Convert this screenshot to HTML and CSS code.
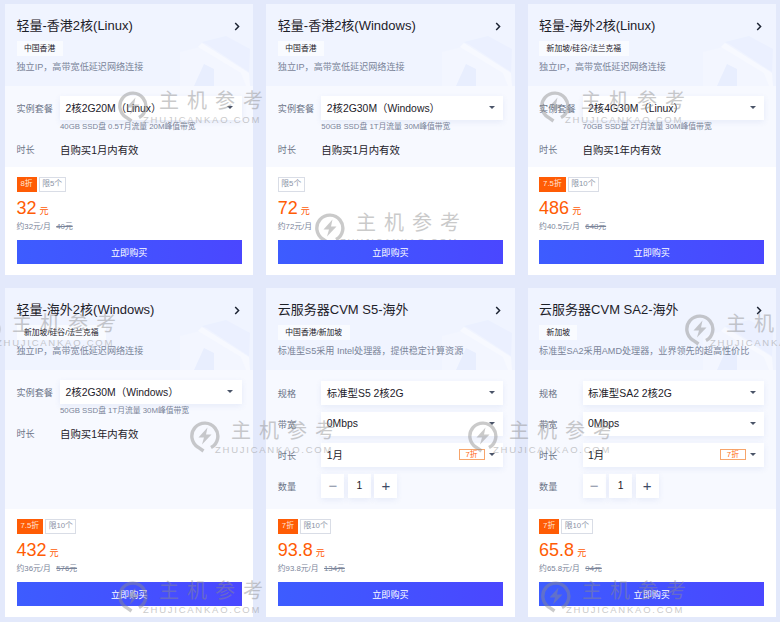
FILE: index.html
```html
<!DOCTYPE html>
<html lang="en">
<head>
  <meta charset="UTF-8">
  <meta name="viewport" content="width=device-width, initial-scale=1.0">
  <title>轻量与云服务器活动</title>
  <link rel="stylesheet" href="styles.css">
</head>
<body>
  <!-- shared drawings -->
  <svg class="defs" width="0" height="0">
    <symbol id="chevron" viewBox="0 0 6 9">
      <path d="M1.2 1 L4.6 4.5 L1.2 8" fill="none" stroke="#1d2433" stroke-width="1.5"/>
    </symbol>
    <symbol id="decor" viewBox="0 0 72 50">
      <path d="M0 16 L24 10 L66 36 L70 50 L0 50 Z" fill="#f3f6ff"/>
      <path d="M22 6 L46 0 L70 13 L69 36 L28 9 Z" fill="#ebf0ff"/>
      <path d="M22 7 L69 37 L70 50 L66 50 L61 37 L18 11 Z" fill="#f7f9ff"/>
      <path d="M14 50 L24 28 L34 33 L34 50 Z" fill="#e8eefe"/>
    </symbol>
    <symbol id="mark" viewBox="0 0 30 33">
      <path d="M21 27.6 A13 13 0 1 0 8 27.2 L13.5 31" fill="none" stroke="#8c8c8c" stroke-width="3.4"/>
      <path d="M17.5 7.5 L8.5 17.5 H14 L12 24.5 L21.5 14.5 H16 Z" fill="#8c8c8c"/>
    </symbol>
  </svg>

  <div class="grid">

    <div class="card">
      <div class="head">
        <svg class="decor"><use href="#decor"/></svg>
        <div class="title-row"><h3>轻量-香港2核(Linux)</h3><svg class="chevron"><use href="#chevron"/></svg></div>
        <span class="region">中国香港</span>
        <p class="desc">独立IP，高带宽低延迟网络连接</p>
      </div>
      <div class="body">
        <div class="row"><span class="label">实例套餐</span><div class="select"><span>2核2G20M（Linux）</span><i class="caret"></i></div></div>
        <p class="spec">40GB SSD盘 0.5T月流量 20M峰值带宽</p>
        <div class="row"><span class="label">时长</span><span class="value">自购买1月内有效</span></div>
      </div>
      <div class="foot">
        <div class="badges"><span class="off">8折</span><span class="limit">限5个</span></div>
        <div class="price">32<small>元</small></div>
        <div class="per">约32元/月<s>40元</s></div>
        <button class="buy">立即购买</button>
      </div>
    </div>

    <div class="card">
      <div class="head">
        <svg class="decor"><use href="#decor"/></svg>
        <div class="title-row"><h3>轻量-香港2核(Windows)</h3><svg class="chevron"><use href="#chevron"/></svg></div>
        <span class="region">中国香港</span>
        <p class="desc">独立IP，高带宽低延迟网络连接</p>
      </div>
      <div class="body">
        <div class="row"><span class="label">实例套餐</span><div class="select"><span>2核2G30M（Windows）</span><i class="caret"></i></div></div>
        <p class="spec">50GB SSD盘 1T月流量 30M峰值带宽</p>
        <div class="row"><span class="label">时长</span><span class="value">自购买1月内有效</span></div>
      </div>
      <div class="foot">
        <div class="badges"><span class="limit">限5个</span></div>
        <div class="price">72<small>元</small></div>
        <div class="per">约72元/月</div>
        <button class="buy">立即购买</button>
      </div>
    </div>

    <div class="card">
      <div class="head">
        <svg class="decor"><use href="#decor"/></svg>
        <div class="title-row"><h3>轻量-海外2核(Linux)</h3><svg class="chevron"><use href="#chevron"/></svg></div>
        <span class="region">新加坡/硅谷/法兰克福</span>
        <p class="desc">独立IP，高带宽低延迟网络连接</p>
      </div>
      <div class="body">
        <div class="row"><span class="label">实例套餐</span><div class="select"><span>2核4G30M（Linux）</span><i class="caret"></i></div></div>
        <p class="spec">70GB SSD盘 2T月流量 30M峰值带宽</p>
        <div class="row"><span class="label">时长</span><span class="value">自购买1年内有效</span></div>
      </div>
      <div class="foot">
        <div class="badges"><span class="off">7.5折</span><span class="limit">限10个</span></div>
        <div class="price">486<small>元</small></div>
        <div class="per">约40.5元/月<s>648元</s></div>
        <button class="buy">立即购买</button>
      </div>
    </div>

    <div class="card">
      <div class="head">
        <svg class="decor"><use href="#decor"/></svg>
        <div class="title-row"><h3>轻量-海外2核(Windows)</h3><svg class="chevron"><use href="#chevron"/></svg></div>
        <span class="region">新加坡/硅谷/法兰克福</span>
        <p class="desc">独立IP，高带宽低延迟网络连接</p>
      </div>
      <div class="body">
        <div class="row"><span class="label">实例套餐</span><div class="select"><span>2核2G30M（Windows）</span><i class="caret"></i></div></div>
        <p class="spec">50GB SSD盘 1T月流量 30M峰值带宽</p>
        <div class="row"><span class="label">时长</span><span class="value">自购买1年内有效</span></div>
      </div>
      <div class="foot">
        <div class="badges"><span class="off">7.5折</span><span class="limit">限10个</span></div>
        <div class="price">432<small>元</small></div>
        <div class="per">约36元/月<s>576元</s></div>
        <button class="buy">立即购买</button>
      </div>
    </div>

    <div class="card">
      <div class="head">
        <svg class="decor"><use href="#decor"/></svg>
        <div class="title-row"><h3>云服务器CVM S5-海外</h3><svg class="chevron"><use href="#chevron"/></svg></div>
        <span class="region">中国香港/新加坡</span>
        <p class="desc">标准型S5采用 Intel处理器，提供稳定计算资源</p>
      </div>
      <div class="body form">
        <div class="row"><span class="label">规格</span><div class="select"><span>标准型S5 2核2G</span><i class="caret"></i></div></div>
        <div class="row"><span class="label">带宽</span><div class="select"><span>0Mbps</span><i class="caret"></i></div></div>
        <div class="row"><span class="label">时长</span><div class="select"><span>1月</span><em class="hint">7折</em><i class="caret"></i></div></div>
        <div class="row"><span class="label">数量</span><div class="stepper"><span class="minus">−</span><span>1</span><span class="plus">+</span></div></div>
      </div>
      <div class="foot">
        <div class="badges"><span class="off">7折</span><span class="limit">限10个</span></div>
        <div class="price">93.8<small>元</small></div>
        <div class="per">约93.8元/月<s>134元</s></div>
        <button class="buy">立即购买</button>
      </div>
    </div>

    <div class="card">
      <div class="head">
        <svg class="decor"><use href="#decor"/></svg>
        <div class="title-row"><h3>云服务器CVM SA2-海外</h3><svg class="chevron"><use href="#chevron"/></svg></div>
        <span class="region">新加坡</span>
        <p class="desc">标准型SA2采用AMD处理器，业界领先的超高性价比</p>
      </div>
      <div class="body form">
        <div class="row"><span class="label">规格</span><div class="select"><span>标准型SA2 2核2G</span><i class="caret"></i></div></div>
        <div class="row"><span class="label">带宽</span><div class="select"><span>0Mbps</span><i class="caret"></i></div></div>
        <div class="row"><span class="label">时长</span><div class="select"><span>1月</span><em class="hint">7折</em><i class="caret"></i></div></div>
        <div class="row"><span class="label">数量</span><div class="stepper"><span class="minus">−</span><span>1</span><span class="plus">+</span></div></div>
      </div>
      <div class="foot">
        <div class="badges"><span class="off">7折</span><span class="limit">限10个</span></div>
        <div class="price">65.8<small>元</small></div>
        <div class="per">约65.8元/月<s>94元</s></div>
        <button class="buy">立即购买</button>
      </div>
    </div>

  </div>

  <!-- watermarks over the page -->
  <div class="wm wm-1"><svg class="wm-icon"><use href="#mark"/></svg><div><b>主机参考</b><span>ZHUJICANKAO.COM</span></div></div>
  <div class="wm wm-2"><svg class="wm-icon"><use href="#mark"/></svg><div><b>主机参考</b><span>ZHUJICANKAO.COM</span></div></div>
  <div class="wm wm-3"><svg class="wm-icon"><use href="#mark"/></svg><div><b>主机参考</b><span>ZHUJICANKAO.COM</span></div></div>
  <div class="wm wm-4"><svg class="wm-icon"><use href="#mark"/></svg><div><b>主机参考</b><span>ZHUJICANKAO.COM</span></div></div>
  <div class="wm wm-5"><svg class="wm-icon"><use href="#mark"/></svg><div><b>主机参考</b><span>ZHUJICANKAO.COM</span></div></div>
  <div class="wm wm-6"><svg class="wm-icon"><use href="#mark"/></svg><div><b>主机参考</b><span>ZHUJICANKAO.COM</span></div></div>
  <div class="wm wm-7"><svg class="wm-icon"><use href="#mark"/></svg><div><b>主机参考</b><span>ZHUJICANKAO.COM</span></div></div>
  <div class="wm wm-8"><svg class="wm-icon"><use href="#mark"/></svg><div><b>主机参考</b><span>ZHUJICANKAO.COM</span></div></div>
  <div class="wm wm-9"><svg class="wm-icon"><use href="#mark"/></svg><div><b>主机参考</b><span>ZHUJICANKAO.COM</span></div></div>
</body>
</html>
```

FILE: styles.css
```css
html, body {
  height: 100%;
  overflow: hidden;
}
body {
  margin: 0;
  position: relative;
  font-family: "Liberation Sans", "Noto Sans CJK SC", sans-serif;
  background-color: #e3e9fb;
  color: #1d2129;
}
.defs {
  position: absolute;
}
.grid {
  display: grid;
  grid-template-columns: repeat(3, 248.3px);
  grid-template-rows: 271px 329px;
  column-gap: 13px;
  row-gap: 13px;
  padding: 4px 0 0 5px;
}
.card {
  display: flex;
  flex-direction: column;
  background-color: #fff;
}
.head {
  position: relative;
  height: 82px;
  flex: none;
  box-sizing: border-box;
  padding: 13px 11.5px 0;
  background-color: #f0f4ff;
  overflow: hidden;
}
.decor {
  position: absolute;
  right: 1px;
  bottom: 0;
  width: 72px;
  height: 50px;
}
.title-row {
  position: relative;
  display: flex;
  justify-content: space-between;
  align-items: center;
  height: 18px;
}
h3 {
  margin: 0;
  font-size: 13px;
  font-weight: 400;
  line-height: 18px;
}
.chevron {
  width: 6px;
  height: 9px;
  margin-right: 2px;
}
.region {
  position: relative;
  display: inline-block;
  margin-top: 6px;
  padding: 0 7.5px;
  height: 15px;
  line-height: 15px;
  font-size: 7.8px;
  background-color: #f9fbff;
}
.desc {
  position: relative;
  margin: 4px 0 0;
  font-size: 9.1px;
  line-height: 14px;
  color: #7a8499;
}
.body {
  flex: 1;
  box-sizing: border-box;
  padding: 10px 11.5px 0 11.5px;
  background-color: #f7f9ff;
}
.body.form {
  padding-top: 11px;
}
.form .row {
  margin-bottom: 7.5px;
}
.row {
  display: flex;
  align-items: center;
  min-height: 23.5px;
}
.label {
  width: 43.5px;
  flex: none;
  font-size: 9.1px;
  color: #6b7487;
}
.value {
  font-size: 10.4px;
}
.select {
  flex: 1;
  display: flex;
  align-items: center;
  height: 23.5px;
  padding: 0 8.5px 0 5.5px;
  font-size: 10.4px;
  background-color: #fff;
  box-shadow: 0 2px 6px rgba(70, 100, 190, 0.09);
}
.select span {
  flex: 1;
}
.caret {
  width: 0;
  height: 0;
  border-left: 3px solid transparent;
  border-right: 3px solid transparent;
  border-top: 3px solid #4a5468;
}
.hint {
  width: 24px;
  height: 9px;
  margin-right: 4px;
  border: 1px solid #f7a56b;
  font-size: 7.8px;
  font-style: normal;
  line-height: 9px;
  text-align: center;
  color: #ff6a13;
}
.stepper {
  display: flex;
  gap: 3.5px;
}
.stepper span {
  width: 23px;
  height: 23.5px;
  font-size: 10.4px;
  line-height: 23.5px;
  text-align: center;
  background-color: #fff;
  box-shadow: 0 2px 6px rgba(70, 100, 190, 0.09);
}
.stepper .minus {
  font-size: 15px;
  color: #8a93a6;
}
.stepper .plus {
  font-size: 15px;
  color: #3d4a66;
}
.spec {
  margin: 1px 0 5px 43.5px;
  font-size: 7.8px;
  line-height: 12px;
  color: #7a8499;
}
.foot {
  height: 108.5px;
  flex: none;
  box-sizing: border-box;
  display: flex;
  flex-direction: column;
  padding: 10.5px 11.5px 11px;
}
.badges {
  display: flex;
  gap: 2px;
  height: 14.5px;
}
.off, .limit {
  box-sizing: border-box;
  font-size: 7.8px;
  height: 14.5px;
}
.off {
  padding: 0 4px;
  background-color: #ff5c05;
  color: #ffe6d5;
  line-height: 14.5px;
}
.limit {
  padding: 0 2.5px;
  border: 1px solid #d9dde6;
  color: #8b93a5;
  line-height: 12.5px;
}
.price {
  margin-top: 6px;
  font-size: 18px;
  line-height: 20px;
  color: #ff5c05;
}
.price small {
  margin-left: 3px;
  font-size: 9.1px;
}
.per {
  font-size: 7.8px;
  line-height: 11px;
  color: #7a8499;
}
.per s {
  margin-left: 5.5px;
}
.buy {
  position: relative;
  z-index: 1;
  margin-top: auto;
  height: 24px;
  padding: 0;
  border: none;
  font-family: inherit;
  font-size: 9.1px;
  color: #fff;
  background: linear-gradient(90deg, #3d5cff, #4a47ff);
}

/* watermark */
.wm {
  position: absolute;
  display: flex;
  gap: 11px;
  opacity: 0.45;
  pointer-events: none;
  white-space: nowrap;
}
.wm-icon {
  width: 30px;
  height: 33px;
  flex: none;
}
.wm b {
  display: block;
  height: 22px;
  font-size: 20px;
  font-weight: 400;
  line-height: 22px;
  letter-spacing: 8px;
  color: #8c8c8c;
}
.wm span {
  display: block;
  margin: 3px 0 0 -16px;
  font-size: 9.5px;
  line-height: 10px;
  letter-spacing: 1.75px;
  color: #8c8c8c;
}
.wm-1 { left: 118px; top: 90px; z-index: 2; }
.wm-2 { left: 315px; top: 212px; }
.wm-3 { left: 540px; top: 90px; z-index: 2; }
.wm-4 { left: -29px; top: 313px; z-index: 2; }
.wm-5 { left: 190px; top: 420px; z-index: 2; }
.wm-6 { left: 468px; top: 420px; z-index: 2; }
.wm-7 { left: 685px; top: 313px; z-index: 2; }
.wm-8 { left: 118px; top: 580px; z-index: 2; }
.wm-9 { left: 541px; top: 580px; z-index: 2; }
```
